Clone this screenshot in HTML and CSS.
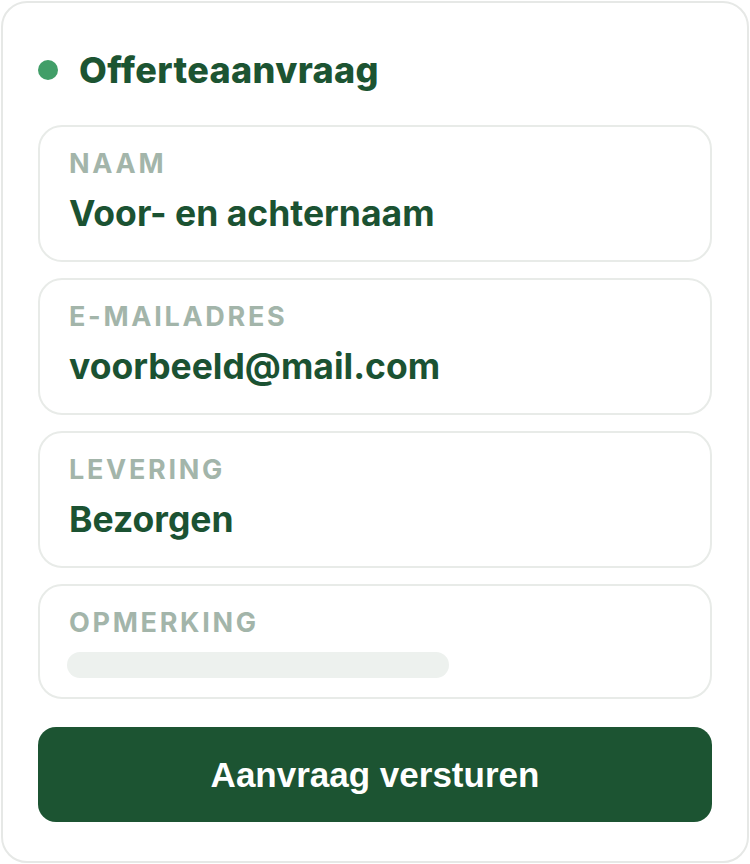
FILE: index.html
```html
<!DOCTYPE html>
<html lang="nl">
<head>
    <meta charset="UTF-8">
    <meta name="viewport" content="width=device-width, initial-scale=1.0">
    <title>Offerteaanvraag</title>
    <link rel="stylesheet" href="styles.css">
</head>
<body>

    <div class="card">
        <h1 class="title"><span class="dot"></span>Offerteaanvraag</h1>

        <div class="field">
            <div class="label">Naam</div>
            <div class="value">Voor- en achternaam</div>
        </div>

        <div class="field">
            <div class="label">E-mailadres</div>
            <div class="value">voorbeeld@mail.com</div>
        </div>

        <div class="field">
            <div class="label">Levering</div>
            <div class="value">Bezorgen</div>
        </div>

        <div class="field field-note">
            <div class="label">Opmerking</div>
            <div class="placeholder-bar"></div>
        </div>

        <button class="submit-button">Aanvraag versturen</button>
    </div>

</body>
</html>
```

FILE: styles.css
```css
body {
    margin: 0;
    padding: 1px;
    background: #ffffff;
    font-family: Inter, 'Liberation Sans', sans-serif;
}

.card {
    display: flex;
    flex-direction: column;
    box-sizing: border-box;
    width: 748px;
    height: 862px;
    padding: 0 35px;
    border: 2px solid #e6e8e6;
    border-radius: 26px;
}

.title {
    display: flex;
    align-items: center;
    gap: 21px;
    margin: 45px 0 0 0;
    height: 44px;
    font-size: 36px;
    font-weight: 800;
    letter-spacing: 0.01em;
    color: #1c5432;
}

.dot {
    width: 20px;
    height: 20px;
    border-radius: 50%;
    background: #419e68;
    flex-shrink: 0;
}

.field {
    border: 2px solid #e8ebe8;
    border-radius: 24px;
    height: 137px;
    box-sizing: border-box;
    padding: 21px 29px 0;
    margin-top: 16px;
}

.title + .field {
    margin-top: 33px;
}

.label {
    font-size: 27px;
    font-weight: 700;
    letter-spacing: 0.1em;
    text-transform: uppercase;
    color: #a3b5aa;
    line-height: 32px;
}

.value {
    font-size: 35.5px;
    font-weight: 700;
    color: #1b5232;
    line-height: 44px;
    margin-top: 12px;
}

.field-note {
    height: 115px;
}

.placeholder-bar {
    width: 382px;
    height: 26px;
    border-radius: 13px;
    background: #edf1ee;
    margin-top: 13px;
    margin-left: -2px;
}

.submit-button {
    margin-top: 28px;
    height: 95px;
    border: none;
    border-radius: 18px;
    background: #1c5432;
    color: #ffffff;
    font-family: 'Liberation Sans', Arial, sans-serif;
    font-size: 35px;
    font-weight: 700;
    cursor: pointer;
}
```
